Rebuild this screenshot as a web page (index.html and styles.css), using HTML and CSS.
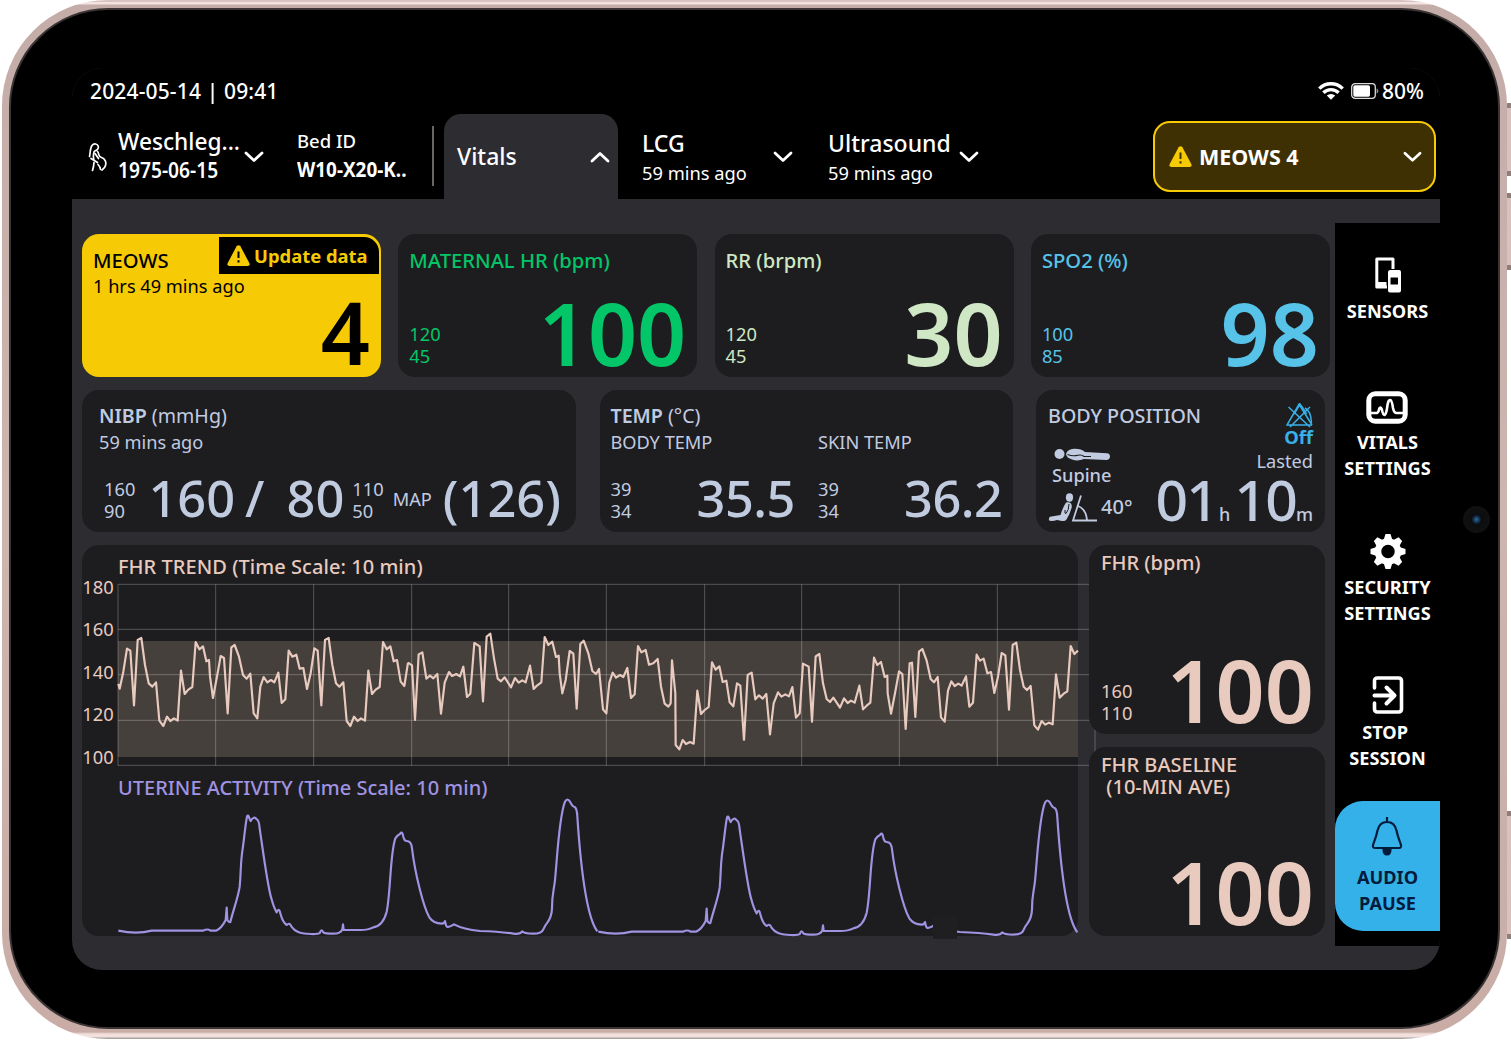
FILE: index.html
```html
<!DOCTYPE html>
<html lang="en">
<head>
  <meta charset="UTF-8" />
  <meta name="viewport" content="width=device-width, initial-scale=1.0"/>
  <title>Maternal Vitals Monitor</title>
  <link rel="stylesheet" href="styles.css">
</head>
<body>
  <div class="tablet">
    <span class="side-button power"></span>
    <span class="side-button volume"></span>
    <span class="side-button lower"></span>
    <div class="bezel">
      <span class="camera"></span>
      <div class="screen">

        <div class="status-bar">
          <span class="clock">2024-05-14 | 09:41</span>
          <div class="status-icons">
            <svg class="wifi" width="26" height="18" viewBox="0 0 26 18" fill="none" stroke="#fff" stroke-width="3.4">
              <path d="M1.3 6.6a16.6 16.6 0 0 1 23.4 0"/>
              <path d="M5.4 10.8a10.8 10.8 0 0 1 15.2 0"/>
              <path d="M13 17.8l-4.2-4.2a6 6 0 0 1 8.4 0z" fill="#fff" stroke="none"/>
            </svg>
            <svg class="battery" width="28" height="16" viewBox="0 0 28 16">
              <rect x="0.7" y="0.7" width="23.6" height="14.6" rx="3.4" fill="none" stroke="#ddd" stroke-width="1.3"/>
              <rect x="2.3" y="2.3" width="16.7" height="11.4" rx="1.6" fill="#fff"/>
              <path d="M25.6 5.2q1.8 1 1.8 2.8t-1.8 2.8z" fill="#999"/>
            </svg>
            <span>80%</span>
          </div>
        </div>

        <div class="nav">
          <div class="patient">
            <svg class="patient-icon" width="19" height="30" viewBox="0 0 19 30" fill="none" stroke="#fff" stroke-width="1.7" stroke-linecap="round" stroke-linejoin="round">
              <path d="M1.500 14.500C2.500 10 2 6 4 3.500C6 1 9.500 1.800 10.300 4.200C10.800 6.500 9 8.500 7 8.800C5.500 9.500 5 14 5.800 17.500"/>
              <path d="M9.500 9.500C11.500 11.500 9.500 14.500 13.500 15.500C17 16.500 18.500 20 17.500 23.500C17 25.500 15.500 27 14 28"/>
              <path d="M3 16.500L9.500 20.500M7 11.500L10.500 16.500M6 20.500C5.800 23.500 5.300 26 4.500 28.500M10 22.500C11.500 24 12.200 25 12.500 27.500"/>
            </svg>
            <div class="patient-text">
              <span class="patient-name">Weschleg...</span>
              <span class="patient-dob">1975-06-15</span>
            </div>
            <svg class="chevron" width="20" height="12" viewBox="0 0 20 12"><path d="M2 2l8 7.500 8-7.500"/></svg>
          </div>
          <div class="bed">
            <span class="bed-label">Bed ID</span>
            <span class="bed-id">W10-X20-K..</span>
          </div>
          <span class="divider"></span>
          <div class="tab active">
            <span>Vitals</span>
            <svg class="chevron" width="20" height="12" viewBox="0 0 20 12"><path d="M2 10l8-7.500 8 7.500"/></svg>
          </div>
          <div class="tab lcg">
            <div class="tab-text"><span>LCG</span><small>59 mins ago</small></div>
            <svg class="chevron" width="20" height="12" viewBox="0 0 20 12"><path d="M2 2l8 7.500 8-7.500"/></svg>
          </div>
          <div class="tab ultrasound">
            <div class="tab-text"><span>Ultrasound</span><small>59 mins ago</small></div>
            <svg class="chevron" width="20" height="12" viewBox="0 0 20 12"><path d="M2 2l8 7.500 8-7.500"/></svg>
          </div>
          <button class="alert-button">
            <svg width="23" height="21" viewBox="0 0 23 21">
              <path d="M9.600 1.200q1.900-2 3.800 0L22.300 18q1 2.500-1.600 3H2.300Q-.300 20.500.700 18z" fill="#f6ca05"/>
              <path d="M11.500 6.500v6.500M11.500 15.200v2.200" stroke="#3e3002" stroke-width="2"/>
            </svg>
            <span>MEOWS 4</span>
            <svg class="chevron" width="19" height="12" viewBox="0 0 20 12"><path d="M2 2l8 7.500 8-7.500"/></svg>
          </button>
        </div>

        <div class="content">
          <div class="panels">

            <div class="row row-top">
              <div class="card meows">
                <h2>MEOWS</h2>
                <p>1 hrs 49 mins ago</p>
                <div class="update-tag">
                  <svg width="23" height="21" viewBox="0 0 23 21">
                    <path d="M9.600 1.200q1.900-2 3.800 0L22.300 18q1 2.500-1.600 3H2.300Q-.300 20.500.700 18z" fill="#f6ca05"/>
                    <path d="M11.500 6.500v6.500M11.500 15.200v2.200" stroke="#000" stroke-width="2"/>
                  </svg>
                  <span>Update data</span>
                </div>
                <div class="reading"><b>4</b></div>
              </div>
              <div class="card hr">
                <h2>MATERNAL HR (bpm)</h2>
                <div class="reading"><div class="limits"><span>120</span><span>45</span></div><b>100</b></div>
              </div>
              <div class="card rr">
                <h2>RR (brpm)</h2>
                <div class="reading"><div class="limits"><span>120</span><span>45</span></div><b>30</b></div>
              </div>
              <div class="card spo2">
                <h2>SPO2 (%)</h2>
                <div class="reading"><div class="limits"><span>100</span><span>85</span></div><b>98</b></div>
              </div>
            </div>

            <div class="row row-middle">
              <div class="card nibp">
                <h2><strong>NIBP</strong> (mmHg)</h2>
                <p>59 mins ago</p>
                <div class="reading">
                  <div class="limits"><span>160</span><span>90</span></div>
                  <b class="sys">160</b>
                  <b class="slash">/</b>
                  <b class="dia">80</b>
                  <div class="limits dia-limits"><span>110</span><span>50</span></div>
                  <span class="map-label">MAP</span>
                  <b class="map">(126)</b>
                </div>
              </div>
              <div class="card temp">
                <h2><strong>TEMP</strong> (°C)</h2>
                <div class="temp-columns">
                  <div class="temp-column">
                    <p>BODY TEMP</p>
                    <div class="reading"><div class="limits"><span>39</span><span>34</span></div><b>35.5</b></div>
                  </div>
                  <div class="temp-column">
                    <p>SKIN TEMP</p>
                    <div class="reading"><div class="limits"><span>39</span><span>34</span></div><b>36.2</b></div>
                  </div>
                </div>
              </div>
              <div class="card position">
                <div class="position-left">
                  <h2>BODY POSITION</h2>
                  <svg class="supine-icon" width="57" height="13" viewBox="0 0 57 13" fill="#c1cbe0">
                    <circle cx="5.500" cy="6" r="5"/>
                    <path d="M12 6Q13.500 1 20 .800Q27 .500 31 4L53 5.300Q56 5.600 56 8.500T53 12L30 11Q24 13.500 18 11.500Q12.500 10 12 6z"/>
                    <path d="M13.500 6.500Q19 8.500 24 7.200Q28 6.500 30 8.500H37" fill="none" stroke="#1d1d1f" stroke-width="1.100"/>
                  </svg>
                  <span class="supine">Supine</span>
                  <div class="angle">
                    <svg width="50" height="29" viewBox="0 0 50 29" fill="#c1cbe0">
                      <ellipse cx="21.500" cy="4.500" rx="3.600" ry="4.200"/>
                      <path d="M18 9.500Q24 8.500 23.800 14Q22 21 18.500 26.500Q17 28.500 14 28L9 27Q4 28.500 1 27.500Q.500 25 2 23.800L12.500 22Q14.500 15 18 9.500z"/>
                      <path d="M21 11Q21 17 18 20.500Q16.500 21.500 17 17" fill="none" stroke="#1d1d1f" stroke-width="1"/>
                      <path d="M33 2.500L25 27.500H49M30 13Q38 16 39 27" fill="none" stroke="#c1cbe0" stroke-width="1.800"/>
                    </svg>
                    <span>40°</span>
                  </div>
                </div>
                <div class="position-right">
                  <svg width="27" height="26" viewBox="0 0 27 26" fill="none" stroke="#38b1e9" stroke-width="1.500">
                    <path d="M13.500 1.500L1 23H26M13.500 1.500Q16 4 20.500 12M2.500 5L24 25M24 5L4 25M19 6Q25 9 25.500 21"/>
                    <path d="M8 12L13.500 3L26 23"/>
                  </svg>
                  <span class="off">Off</span>
                  <span class="lasted">Lasted</span>
                  <div class="duration"><b class="hours">01</b><small class="hours-unit">h</small><b>10</b><small>m</small></div>
                </div>
              </div>
            </div>

            <div class="row row-bottom">
              <div class="card charts">
                <h2 class="fhr-color">FHR TREND (Time Scale: 10 min)</h2>
                <!-- chart units are a third of a pixel -->
                <svg class="trend" width="996" height="194" viewBox="36 114 2988 582">
                  <rect x="144" y="303" width="2880" height="348" fill="#46403d"/>
                  <g class="grid-lines">
                    <path d="M144 133H3060M144 268H3060M144 404H3060M144 541H3060M144 676H3060"/>
                    <path d="M144 133V677M437 133V677M731 133V677M1025 133V677M1316 133V677M1609 133V677M1904 133V677M2195 133V677M2488 133V677M2782 133V677M3075 133V677"/>
                  </g>
                  <g class="axis">
                    <text x="131" y="161">180</text>
                    <text x="131" y="289">160</text>
                    <text x="131" y="416">140</text>
                    <text x="131" y="544">120</text>
                    <text x="131" y="671">100</text>
                  </g>
                  <g class="fhr-line">
                    <polyline points="145,432 149,446 160,395 171,326 181,332 192,496 203,300 214,294 225,375 236,430 247,440 258,427 268,542 280,558 291,530 301,543 312,535 323,542 333,392 344,462 355,449 367,441 377,306 388,328 399,319 409,364 417,360 420,410 429,474 440,415 452,348 462,354 473,520 484,322 494,315 507,350 519,405 530,416 541,401 551,520 562,535 571,440 581,411 592,427 603,420 613,427 625,398 635,489 646,478 656,332 667,350 679,344 689,386 700,384 711,447 722,400 733,325 743,332 754,496 765,300 776,294 787,375 798,430 808,440 820,427 830,543 841,558 852,530 863,543 873,535 885,542 895,392 906,462 917,449 929,441 939,306 950,328 961,319 971,364 981,360 992,425 1003,438 1014,368"/>
                    <polyline transform="translate(990)" points="24,368 36,376 45,540 56,343 67,337 79,416 90,407 100,415 112,402 123,521 134,428 147,396 156,408 169,402 180,409 190,380 201,471 211,461 223,309 239,319 249,484 260,290 271,281 282,355 293,416 303,424 314,412 333,442 345,414 356,428 367,421 377,427 390,377 401,447 412,436 424,427 434,291 445,315 457,305 468,351 476,347 479,400 487,460 497,420 509,333 520,341 530,506 541,312 551,302 565,340 577,393 588,402 597,387 609,508 619,520 628,428 638,398 648,413 660,405 670,411 682,384 693,474 704,463 714,318 724,337 737,330 747,374 760,370 773,357 783,440 794,491 805,500 812,490 816,361 826,460 827,615 838,628 848,600 858,612 870,606 881,611 892,452 903,522 914,510 926,501 936,367 947,389 958,379 968,426 979,422 989,487 1000,499 1011,430 1021,437 1032,601"/>
                    <polyline transform="translate(2010)" points="12,601 23,405 35,398 46,478 57,466 68,476 79,462 90,583 101,490 114,457 124,470 136,463 147,469 157,441 168,533 179,520 189,371 206,380 216,545 227,349 238,342 249,430 260,477 270,486 280,473 300,503 312,475 323,489 333,482 344,488 358,437 369,508 380,497 391,488 402,353 412,375 423,366 434,411 442,407 443,460 453,521 465,460 477,394 487,402 497,567 509,370 516,368 526,531 537,335 547,327 560,362 572,417 582,427 593,411 603,532 614,545 624,452 634,424 644,438 655,431 665,437 678,409 688,500 699,488 710,344 720,362 731,356 742,400 753,396 763,459 774,410 785,339 796,346 807,509 818,315 829,308 840,390 851,440 861,450 872,438 883,556 894,569 905,543 916,554 927,548 938,553 948,403 959,473 971,461 982,454 992,318 1003,342 1014,332"/>
                  </g>
                </svg>
                <h2 class="ua-color">UTERINE ACTIVITY (Time Scale: 10 min)</h2>
                <svg class="uterine" width="996" height="135" viewBox="36 93 2988 405">
                  <g class="ua-line">
                    <path id="contractions" d="M145 482Q200 494 245 482L400 482Q412 475 422 482L438 482Q455 475 467 450L470 413L472 450Q477 458 481 456C490 420 505 380 509 350C513 310 511 290 516 250C522 215 526 160 531 140Q535 131 538 145L542 153Q552 136 560 148Q567 150 569 175C580 250 593 350 604 385Q612 415 620 427Q627 410 631 430C636 450 645 462 650 465Q658 457 662 466C675 490 700 491 722 492Q745 493 750 488Q754 474 760 487Q765 491 790 491Q812 491 817 478L819 463L821 480L870 480Q895 480 910 472Q940 466 950 425C962 370 960 250 976 205Q982 195 990 192Q996 180 1000 200Q1003 213 1010 213Q1024 213 1026 235C1035 310 1060 410 1078 442Q1090 460 1115 461Q1124 460 1125 453Q1128 472 1134 471Q1145 468 1152 463Q1180 478 1230 483Q1290 485 1330 491Q1350 494 1357 484Q1361 491 1390 491Q1415 491 1420 478Q1424 468 1432 458Q1445 440 1446 415C1446 370 1452 360 1455 330C1462 260 1467 140 1485 95Q1492 82 1500 95Q1508 110 1514 111Q1521 115 1522 140C1530 260 1548 440 1582 484"/>
                    <use href="#contractions" x="1440" y="3"/>
                  </g>
                  <rect x="2589" y="440" width="72" height="67" fill="#1f1f21"/>
                </svg>
              </div>
              <div class="fhr-column">
                <div class="card fhr">
                  <h2>FHR (bpm)</h2>
                  <div class="reading"><div class="limits"><span>160</span><span>110</span></div><b>100</b></div>
                </div>
                <div class="card fhr">
                  <h2>FHR BASELINE<br>&nbsp;(10-MIN AVE)</h2>
                  <div class="reading"><b>100</b></div>
                </div>
              </div>
            </div>
          </div>

          <div class="sidebar">
            <div class="side-item sensors">
              <svg width="26" height="36" viewBox="0 0 26 36">
                <path d="M18 12V2H1.800V30H12" fill="none" stroke="#fff" stroke-width="3" stroke-linejoin="round"/>
                <path d="M1 25H11.500V31H1z" fill="#fff"/>
                <path d="M15.500 13H24Q26 13 26 15V33.500Q26 35.500 24 35.500H15Q13 35.500 13 33.500V15Q13 13 15.500 13zM16 20.500Q15.500 20.500 15.500 21V27Q15.500 27.500 16 27.500H22.500Q23 27.500 23 27V21Q23 20.500 22.500 20.500z" fill="#fff" fill-rule="evenodd"/>
              </svg>
              <span>SENSORS</span>
            </div>
            <div class="side-item vitals">
              <svg width="42" height="33" viewBox="0 0 42 33" fill="none" stroke="#fff">
                <rect x="2.800" y="2.800" width="36.400" height="27.400" rx="6.500" stroke-width="5"/>
                <path d="M5 22H11Q12.500 21.500 13.300 17.500Q14.500 15.500 15.700 18Q17 24 18.500 24Q20.500 23 21.500 14Q22.500 8.500 24.300 9Q26 9.500 27 17Q28 22 30.500 22H37" stroke-width="2.600" stroke-linejoin="round"/>
              </svg>
              <span>VITALS<br>SETTINGS</span>
            </div>
            <div class="side-item security">
              <svg width="36" height="35" viewBox="-18 -17.500 36 35">
                <circle r="10" fill="none" stroke="#fff" stroke-width="6.500"/>
                <g fill="#fff">
                  <path id="tooth" d="M-4.200-12L-2.500-17.500H2.500L4.200-12z"/>
                  <use href="#tooth" transform="rotate(45)"/>
                  <use href="#tooth" transform="rotate(90)"/>
                  <use href="#tooth" transform="rotate(135)"/>
                  <use href="#tooth" transform="rotate(180)"/>
                  <use href="#tooth" transform="rotate(225)"/>
                  <use href="#tooth" transform="rotate(270)"/>
                  <use href="#tooth" transform="rotate(315)"/>
                </g>
              </svg>
              <span>SECURITY<br>SETTINGS</span>
            </div>
            <div class="side-item stop">
              <svg width="32" height="38" viewBox="0 0 32 38" fill="none" stroke="#fff" stroke-width="3.600" stroke-linecap="round" stroke-linejoin="round">
                <path d="M2.500 12V5Q2.500 2 5.500 2H26.500Q29.500 2 29.500 5V33Q29.500 36 26.500 36H5.500Q2.500 36 2.500 33V27"/>
                <path d="M2.500 19.500H22M14.500 11.500L22.500 19.500L14.500 27.500" stroke-width="4"/>
              </svg>
              <span>STOP&nbsp;<br>SESSION</span>
            </div>
            <div class="side-item audio">
              <svg width="32" height="40" viewBox="0 0 32 40" fill="none" stroke="#041c3b" stroke-width="2.200">
                <path d="M16 1V6M16 6C10 6 7.500 10 6.500 14.500C5.500 20 3.500 24.500 2 29Q1.500 32 4 32H28Q30.500 32 30 29C28.500 24.500 26.500 20 25.500 14.500C24.500 10 22 6 16 6z"/>
                <path d="M12.500 33Q12.500 38.500 16 38.500T19.500 33z" fill="#041c3b"/>
              </svg>
              <span>AUDIO<br>PAUSE</span>
            </div>
          </div>
        </div>
      </div>
    </div>
  </div>
</body>
</html>
```
FILE: styles.css
```css
* {
  box-sizing: border-box;
}

body {
  margin: 0;
  background-color: #fff;
  font-family: "Noto Sans", "Open Sans", sans-serif;
  font-weight: 500;
  color: #fff;
  overflow: hidden;
}

h2,
p {
  margin: 0;
}

svg {
  display: block;
  flex-shrink: 0;
}

/* device frame */
.tablet {
  position: relative;
  width: 1505px;
  height: 1039px;
  margin-left: 2px;
  padding: 8px 7px 10px 7px;
  border-radius: 106px;
  background: linear-gradient(#d8c3c0 0, #d8c3c0 2px, #f3e2e0 2px, #f3e2e0 4px, #c4aca8 5px, #cdb5b0 50%, #c9aca6 1032px, #f3e0dd 1034px, #f3e0dd 1037px, #a8a3a1 1038px);
}

.side-button {
  position: absolute;
  right: -4px;
  width: 4px;
  background-color: #d9c1bd;
  border-top: 5px solid #8f7d7a;
  border-bottom: 5px solid #8f7d7a;
}

.power {
  top: 103px;
  height: 73px;
}

.volume {
  top: 193px;
  height: 77px;
}

.lower {
  top: 811px;
  height: 128px;
}

.bezel {
  position: relative;
  height: 1021px;
  padding: 58px 58px 58px 61px;
  border: 2px solid #3a3434;
  border-radius: 99px;
  background-color: #000;
}

.camera {
  position: absolute;
  right: 8px;
  top: 496px;
  width: 27px;
  height: 27px;
  border-radius: 50%;
  background: radial-gradient(circle, #2c6a94 0, #123350 3px, #0c0d10 5px, #101010 12px);
}

.screen {
  width: 1368px;
  height: 902px;
  border-radius: 30px;
  background-color: #2d2c31;
  overflow: hidden;
}

/* header */
.status-bar {
  display: flex;
  justify-content: space-between;
  align-items: center;
  height: 46px;
  padding: 0 16px 0 18px;
  background-color: #000;
  font-size: 21px;
}

.clock {
  letter-spacing: 0.15px;
}

.status-icons {
  display: flex;
  align-items: center;
}

.battery {
  margin: 0 3px 0 7px;
}

.nav {
  display: flex;
  height: 85px;
  background-color: #000;
}

.chevron path {
  fill: none;
  stroke: #fff;
  stroke-width: 2.8;
  stroke-linecap: round;
  stroke-linejoin: round;
}

.patient {
  display: flex;
  align-items: center;
  width: 225px;
  padding-left: 16px;
}

.patient-icon {
  margin-right: 11px;
}

.patient-text,
.bed,
.tab-text {
  display: flex;
  flex-direction: column;
  line-height: 29px;
  white-space: nowrap;
}

.patient-text {
  width: 126px;
}

.patient-name {
  font-size: 22.7px;
  line-height: 28px;
}

.patient-dob,
.bed-id {
  font-size: 21px;
  font-weight: 600;
  transform: scaleX(0.915);
  transform-origin: left;
}

.bed {
  justify-content: center;
  width: 135px;
  padding-bottom: 4px;
}

.bed-label {
  font-size: 18.5px;
}

.bed-id {
  font-weight: 700;
  transform: scaleX(0.9);
}

.divider {
  width: 2px;
  height: 60px;
  margin: 12px 10px 0 0;
  background-color: #6b6564;
}

.tab {
  display: flex;
  align-items: center;
  justify-content: space-between;
  font-size: 23px;
}

.tab.active {
  width: 174px;
  padding: 0 8px 0 13px;
  border-radius: 17px 17px 0 0;
  background-color: #2d2c31;
}

.tab.active span {
  padding-bottom: 1px;
}

.tab small {
  font-size: 18.3px;
  font-weight: 400;
}

.tab-text {
  padding-top: 2px;
}

.lcg {
  width: 151px;
  margin: 1px 0 0 24px;
}

.ultrasound {
  width: 151px;
  margin: 1px 0 0 35px;
}

.alert-button {
  display: flex;
  align-items: center;
  width: 283px;
  height: 71px;
  margin: 7px 4px 0 auto;
  padding: 0 12px 0 14px;
  border: 2px solid #f6ca05;
  border-radius: 17px;
  background-color: #3e3002;
  color: #fff;
  font-family: inherit;
  font-size: 21.5px;
  font-weight: 700;
}

.alert-button span {
  margin-left: 7px;
}

.alert-button .chevron {
  margin-left: auto;
}

/* cards */
.content {
  display: flex;
  justify-content: space-between;
}

.panels {
  display: flex;
  flex-direction: column;
  gap: 13px;
  padding: 35px 0 0 10px;
}

.row {
  display: flex;
}

.card {
  border-radius: 17px;
  background-color: #1d1d1f;
}

.card h2 {
  font-size: 20px;
  font-weight: 500;
  line-height: 26px;
}

.card p {
  font-size: 18.2px;
  font-weight: 400;
  line-height: 26px;
}

.row-top {
  gap: 17.3px;
}

.row-top .card {
  position: relative;
  display: flex;
  flex-direction: column;
  width: 299px;
  height: 142.5px;
  padding: 13px 11px 8px 11px;
}

.row-top h2 {
  font-size: 20.2px;
  font-weight: 550;
}

.reading {
  display: flex;
  justify-content: space-between;
  align-items: flex-end;
  margin-top: auto;
}

.reading b {
  font-size: 86px;
  font-weight: 560;
  line-height: 72px;
}

.limits {
  display: flex;
  flex-direction: column;
  margin-bottom: 1px;
  font-size: 18.3px;
  font-weight: 400;
  line-height: 22px;
}

.row-top .limits {
  margin-bottom: 2px;
}

.card.meows {
  background-color: #f6ca05;
  color: #000;
}

.meows .reading {
  justify-content: flex-end;
  margin-top: -3px;
}

.update-tag {
  position: absolute;
  top: 3px;
  right: 2px;
  display: flex;
  align-items: center;
  gap: 4px;
  width: 160px;
  height: 37px;
  padding: 0 0 1px 8px;
  border-top-right-radius: 15px;
  background-color: #000;
  color: #f6ca05;
  font-size: 18.4px;
  font-weight: 700;
  white-space: nowrap;
}

.hr {
  color: #02c668;
}

.rr {
  color: #cfe7c4;
}

.spo2 {
  color: #57c3e9;
}

.row-middle .card {
  display: flex;
  flex-direction: column;
  height: 142px;
  padding: 13px 12px 9px 12px;
  color: #c1cbe0;
}

.row-middle h2 {
  font-size: 19.6px;
  font-weight: 400;
}

.row-middle strong {
  font-weight: 600;
}

.row-middle .reading b {
  font-size: 50.5px;
  font-weight: 550;
  line-height: 51px;
}

.row-middle .nibp {
  width: 494px;
  margin-right: 23.5px;
  padding-left: 17px;
}

.nibp .reading {
  justify-content: flex-start;
  padding-left: 5px;
}

.sys {
  margin-left: 13px;
}

.slash {
  margin-left: 10px;
}

.dia {
  margin-left: 22px;
}

.dia-limits {
  margin-left: 8px;
}

.map-label {
  margin-left: 9px;
  font-size: 18.2px;
  font-weight: 400;
  line-height: 47px;
}

.map {
  margin-left: 11px;
}

.row-middle .temp {
  width: 413px;
  margin-right: 23.5px;
  padding: 13px 10px 9px 11px;
}

.temp-columns {
  display: flex;
  flex: 1;
  gap: 23px;
}

.temp-column {
  display: flex;
  flex: 1;
  flex-direction: column;
}

.temp-column b {
  letter-spacing: -0.5px;
}

.row-middle .position {
  flex-direction: row;
  justify-content: space-between;
  width: 289px;
}

.position-left {
  width: 100px;
  white-space: nowrap;
}

.position-left h2 {
  font-size: 19.7px;
  font-weight: 500;
}

.supine-icon {
  margin: 19px 0 0 6px;
}

.supine {
  display: block;
  margin: 1px 0 0 4px;
  font-size: 18.2px;
  line-height: 26px;
}

.angle {
  display: flex;
  align-items: center;
  gap: 3px;
  margin-top: 5px;
  font-size: 20px;
  line-height: 28px;
}

.position-right {
  display: flex;
  flex-direction: column;
  align-items: flex-end;
}

.position-right svg {
  margin-top: -1px;
}

.off {
  color: #38b1e9;
  font-size: 18.4px;
  font-weight: 700;
  line-height: 18px;
}

.lasted {
  font-size: 18.2px;
  font-weight: 400;
  line-height: 31px;
}

.duration {
  display: flex;
  align-items: baseline;
  line-height: 44px;
}

.duration b {
  font-size: 57px;
  font-weight: 540;
  letter-spacing: -1.8px;
}

.duration .hours {
  margin-right: 2px;
}

.duration small {
  font-size: 18px;
}

.duration .hours-unit {
  margin-right: 4px;
}

/* charts */
.row-bottom {
  gap: 11px;
}

.card.charts {
  width: 996px;
  height: 391px;
  padding-top: 9px;
}

.charts h2 {
  padding-left: 36px;
}

.trend,
.uterine {
  overflow: visible;
}

.trend {
  margin: -2px 0 3px;
}

.charts .fhr-color {
  letter-spacing: 0.05px;
}

.grid-lines {
  fill: none;
  stroke: #fff;
  stroke-opacity: 0.25;
  stroke-width: 3;
}

.axis {
  fill: #e8cabf;
  font-size: 55px;
  font-weight: 400;
  text-anchor: end;
}

.fhr-line {
  fill: none;
  stroke: #e8cabf;
  stroke-width: 6.5;
  stroke-linejoin: round;
}

.ua-line {
  fill: none;
  stroke: #a093e2;
  stroke-width: 6.5;
  stroke-linejoin: round;
}

.fhr-color,
.fhr {
  color: #e8cabf;
}

.ua-color {
  color: #a093e2;
}

.fhr-column {
  display: flex;
  flex-direction: column;
  gap: 13px;
}

.card.fhr {
  display: flex;
  flex-direction: column;
  width: 236px;
  height: 189px;
  padding: 7px 11px 8px 12px;
}

.fhr h2 {
  line-height: 22px;
}

.fhr .limits {
  margin-bottom: 2px;
}

.fhr .reading b {
  margin-left: auto;
}

/* sidebar */
.sidebar {
  width: 105px;
  height: 723px;
  margin-top: 24px;
  padding-top: 34px;
  background-color: #000;
}

.side-item {
  display: flex;
  flex-direction: column;
  align-items: center;
  gap: 5px;
  font-size: 18.2px;
  font-weight: 700;
  line-height: 26px;
  text-align: center;
}

.sensors {
  margin-bottom: 67px;
}

.vitals {
  margin-bottom: 53px;
}

.vitals svg,
.audio svg {
  margin-right: 2px;
}

.security {
  margin-bottom: 50px;
}

.stop {
  margin-bottom: 30px;
}

.audio {
  height: 130px;
  padding-top: 15px;
  gap: 8px;
  border-radius: 28px 0 0 28px;
  background-color: #35b1ea;
  color: #041c3b;
}
```
